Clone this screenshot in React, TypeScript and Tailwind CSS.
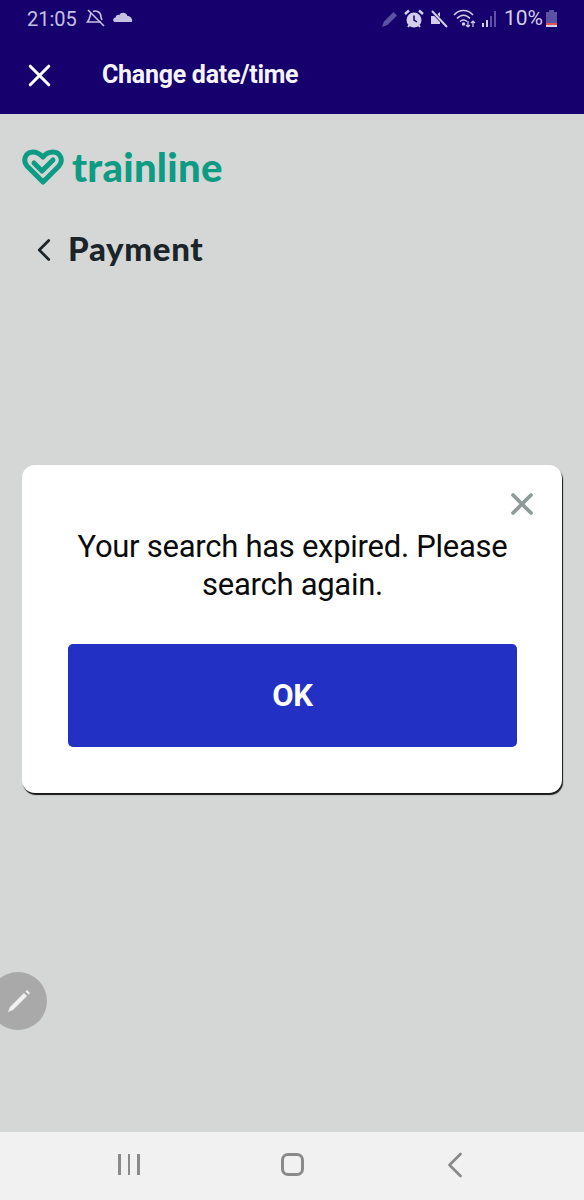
import { FC } from "react";
import { X, ChevronLeft } from "lucide-react";

const StatusLeft: FC = () => (
  <div className="flex items-center">
    <span className="text-[20px] leading-none text-[#c6c0e4]">21:05</span>
    <svg className="ml-[9px] mt-[-1px]" width="20" height="20" viewBox="0 0 20 20" fill="none" stroke="#c6c0e4" strokeWidth="1.6">
      <path d="M2 2 L18 18" />
      <path d="M5 5 C4 7 4 11 1.5 14 H15 M7 3.5 C10 2 15 4 15 9 C15 10 15.5 11 16 12" />
    </svg>
    <svg className="ml-[7px] mt-[-3px]" width="20" height="14" viewBox="0 0 20 14" fill="#c6c0e4">
      <path d="M2 12 C-.6 12 -.6 8 2.5 7.6 C3 5 5 4.600 6.500 5 C7.500 2 13 1.500 14.500 6 C19 6 20.500 12 18 12 Z" />
    </svg>
  </div>
);

const StatusRight: FC = () => (
  <div className="flex items-center">
    <svg width="18" height="18" viewBox="0 0 18 18" fill="#5d51a3">
      <path d="M1 17 L3 11.500 L12.500 2 L16 5.500 L6.500 15 Z" />
    </svg>
    <svg className="ml-[5px]" width="20" height="20" viewBox="0 0 20 20">
      <circle cx="10" cy="11" r="7.500" fill="#d3cfea" />
      <path d="M10 6.500 V11 L13 13" stroke="#15006e" strokeWidth="1.500" fill="none" />
      <path d="M1 5 L5 1.500 M19 5 L15 1.500" stroke="#d3cfea" strokeWidth="2.500" />
      <path d="M4 18 L5.500 16 M16 18 L14.500 16" stroke="#d3cfea" strokeWidth="2" />
    </svg>
    <svg className="ml-[6px]" width="18" height="18" viewBox="0 0 18 18" fill="#d3cfea">
      <path d="M1 6 H5 L10 2 V14 H5 H1 Z" />
      <path d="M2 1 L17 17" stroke="#15006e" strokeWidth="3.500" />
      <path d="M2 1 L17 17" stroke="#d3cfea" strokeWidth="2" />
    </svg>
    <svg className="ml-[5px]" width="24" height="20" viewBox="0 0 24 20" fill="none" stroke="#d3cfea" strokeWidth="1.500">
      <path d="M1 6 C6 0 15 0 20 6" />
      <path d="M4 9.500 C8 5 13 5 17 9.500" />
      <path d="M7 12.500 C9 10.500 12 10.500 14 12.500" />
      <circle cx="10.500" cy="15" r="1" fill="#d3cfea" />
      <path d="M15 12 V18 M13 16 L15 18 L17 16 M20 18 V12 M18 14 L20 12 L22 14" strokeWidth="1.200" />
    </svg>
    <svg className="ml-[4px]" width="17" height="18" viewBox="0 0 17 18">
      <rect x="1" y="13" width="2" height="4" fill="#d3cfea" />
      <rect x="5" y="10" width="2" height="7" fill="#d3cfea" />
      <rect x="9" y="6" width="2" height="11" fill="#5d51a3" />
      <rect x="13" y="1" width="2" height="16" fill="#5d51a3" />
    </svg>
    <span className="ml-[6px] text-[21px] leading-none text-[#d3cfea]">10%</span>
    <svg className="ml-[3px]" width="11" height="18" viewBox="0 0 11 18">
      <rect x="3" y="0" width="5" height="2" fill="#5d51a3" />
      <rect x="0" y="2" width="11" height="11" fill="#5d51a3" />
      <rect x="0" y="13" width="11" height="2" fill="#e0524d" />
      <rect x="0" y="15" width="11" height="2" fill="#d3cfea" />
    </svg>
  </div>
);

const Logo: FC = () => (
  <div className="flex items-center pl-[22px]">
    <svg width="42" height="36" viewBox="0 0 42 36" fill="none" stroke="#0c9b83" strokeWidth="5" strokeLinejoin="round" strokeLinecap="round">
      <path d="M21 33 L5 17 C0 11 4 3 11 3 C15 3 18 5 21 8 C24 4 27 3 31 3 C38 3 42 11 37 17 L21 33" />
      <path d="M12 14 L20 22 L31 11" />
    </svg>
    <span className="ml-[8px] font-['Lato',sans-serif] text-[40px] leading-none font-black tracking-[0.27px] text-[#0c9b83]">trainline</span>
  </div>
);

const ExpiredDialog: FC = () => (
  <div className="relative mx-[22px] mt-[197px] h-[328px] rounded-[13px] bg-white shadow-[1px_2px_1px_rgba(0,0,0,0.9)]">
    <button className="absolute top-[21px] right-[22px] text-[#8f9a9b]">
      <X size={36} strokeWidth={2.500} />
    </button>
    <div className="pt-[63px] pr-[45px] pl-[46px] text-center">
      <p className="text-[31px] leading-[38px] tracking-[-0.27px] text-[#0b0b0b]">Your search has expired. Please search again.</p>
      <button className="mt-[40px] flex h-[103px] w-full items-center justify-center rounded-[5px] bg-[#2231c4] pt-[1px] text-[31px] font-bold tracking-[-0.4px] text-white">
        OK
      </button>
    </div>
  </div>
);

export default function App() {
  return (
    <div className="relative flex h-[1200px] w-[584px] flex-col overflow-hidden bg-[#d5d7d6] font-['Roboto',sans-serif]">
      <header className="h-[114px] bg-[#15006e]">
        <div className="flex h-[37px] items-center justify-between pr-[27px] pl-[27px]">
          <StatusLeft />
          <StatusRight />
        </div>
        <div className="flex h-[76px] items-center pl-[21px]">
          <X size={37} strokeWidth={2} className="text-white" />
          <h1 className="ml-[44px] text-[25px] font-bold tracking-[-0.27px] text-[#f5f4fb]">Change date/time</h1>
        </div>
      </header>

      <main className="flex-1">
        <div className="mt-[33px]">
          <Logo />
        </div>
        <div className="mt-[41px] flex items-center pl-[25px]">
          <ChevronLeft size={38} strokeWidth={1.700} className="translate-y-[2px] text-[#1b2429]" />
          <h2 className="ml-[5px] font-['Lato',sans-serif] text-[33px] leading-[40px] font-black tracking-[0.7px] text-[#1b2429]">Payment</h2>
        </div>
        <ExpiredDialog />
      </main>

      <div className="absolute top-[972px] left-[-11px] flex h-[58px] w-[58px] items-center justify-center rounded-full bg-[#a8a9a8]">
        <svg className="ml-[2px]" width="26" height="26" viewBox="0 0 26 26">
          <path d="M2 24 L4 19 L18 5 L21 8 L7 22 Z" fill="#f1f1f1" />
          <path d="M19.500 3.500 L21 2 L24 5 L22.500 6.500 Z" fill="#f1f1f1" />
        </svg>
      </div>

      <nav className="flex h-[68px] items-center justify-center bg-[#f1f1f1] pb-[3px]">
        <div className="grid grid-cols-[163px_163px_163px] items-center justify-items-center">
          <div className="flex gap-[7px]">
            <span className="h-[21px] w-[2.500px] bg-[#8a8a8a]" />
            <span className="h-[21px] w-[2.500px] bg-[#8a8a8a]" />
            <span className="h-[21px] w-[2.500px] bg-[#8a8a8a]" />
          </div>
          <span className="h-[23px] w-[23px] rounded-[7px] border-[3px] border-[#8a8a8a]" />
          <ChevronLeft size={44} strokeWidth={1.500} className="text-[#8a8a8a]" />
        </div>
      </nav>
    </div>
  );
}
